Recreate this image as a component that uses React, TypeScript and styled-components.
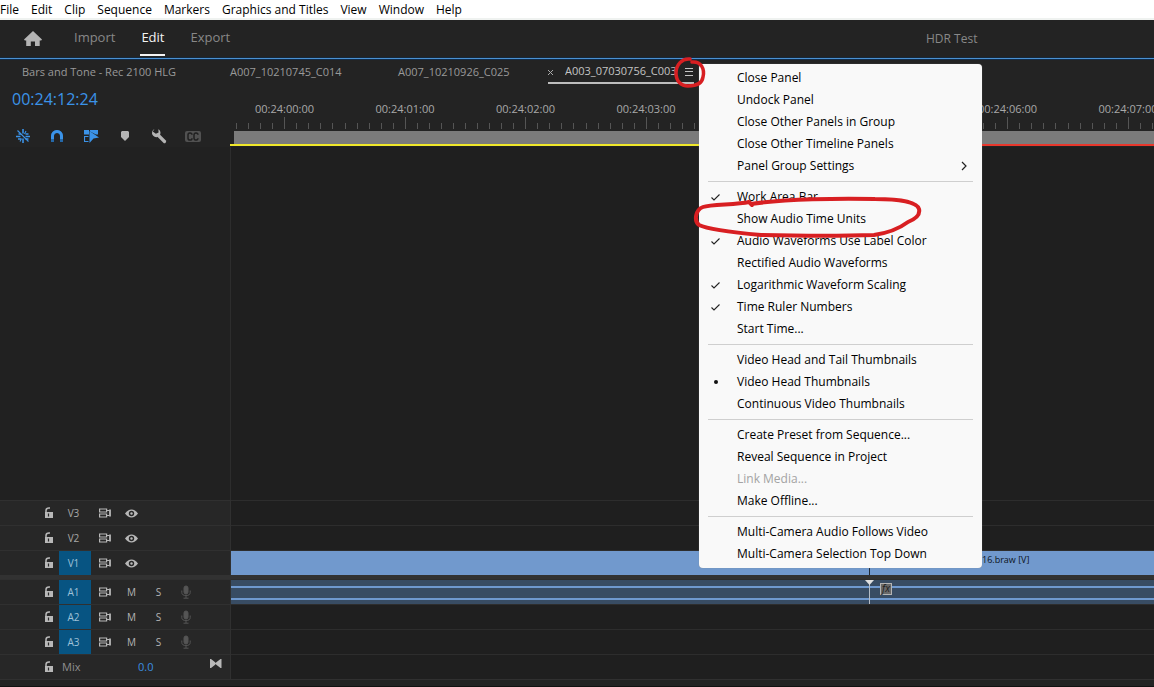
import React from "react";
import styled, { createGlobalStyle, css } from "styled-components";

const GlobalStyle = createGlobalStyle`
  *, *::before, *::after { box-sizing: border-box; }
  body {
    margin: 0;
    background: #1f1f1f;
    font-family: "Open Sans", "Noto Sans", sans-serif;
    font-size: 12px;
    overflow: hidden;
  }
  button, input {
    font: inherit;
    color: inherit;
    background: none;
    border: 0;
    padding: 0;
    margin: 0;
  }
  ul { list-style: none; margin: 0; padding: 0; }
  svg { display: block; flex: none; }
`;

const Shell = styled.div`
  display: flex;
  flex-direction: column;
  min-height: 100vh;
  background: #232323;
  color: #a0a0a0;
  overflow: hidden;
`;

const MenuBar = styled.nav`
  display: flex;
  gap: 12px;
  height: 20px;
  background: #fff;
  border-bottom: 2px solid #eff2f0;
  color: #000;
  line-height: 20px;
`;

const MenuBarItem = styled.button`
  height: 20px;
  white-space: nowrap;
`;

const Header = styled.header`
  display: flex;
  align-items: stretch;
  height: 38px;
  padding-left: 24px;
`;

const HomeButton = styled.button`
  display: flex;
  align-items: center;
  margin-right: 31px;
`;

const ModeTabs = styled.div`
  display: flex;
  gap: 24px;
`;

const ModeTab = styled.button<{ $active?: boolean }>`
  height: 36px;
  border-bottom: 2px solid ${(p) => (p.$active ? "#f4f4f4" : "transparent")};
  color: ${(p) => (p.$active ? "#f4f4f4" : "#888")};
  font-size: 13px;
  line-height: 34px;
  padding: 0 1px;
`;

const ProjectName = styled.div`
  margin-left: auto;
  width: 228px;
  color: #888;
  line-height: 38px;
`;

const TabStrip = styled.div`
  display: flex;
  height: 28px;
  border-top: 1px solid #4a90d2;
  box-shadow: 0 -1px 0 #16283a, inset 0 1px 0 #122c48;
  padding-left: 22px;
  font-size: 11px;
  line-height: 24px;
  color: #999;
`;

const SequenceTab = styled.button<{ $width: number }>`
  flex: none;
  width: ${(p) => p.$width}px;
  height: 25px;
  text-align: left;
  white-space: nowrap;
`;

const ActiveTab = styled.div`
  position: relative;
  display: flex;
  align-items: center;
  width: 146px;
  height: 25px;
  border-bottom: 2px solid #bdbdbd;
  color: #c4c4c4;
`;

const CloseTab = styled.button`
  width: 17px;
  padding-top: 3px;
  text-align: left;
`;

const TabTitle = styled.button`
  width: 111px;
  height: 24px;
  overflow: hidden;
  text-align: left;
  white-space: nowrap;
`;

const PanelMenuButton = styled.button`
  margin-left: auto;
  padding-top: 3px;
`;

const PanelMenu = styled.div`
  position: absolute;
  z-index: 5;
  top: 5px;
  left: 151px;
  width: 283px;
  padding: 3px 0;
  background: #f9f9f9;
  border-radius: 4px;
  color: #000;
  font-size: 12px;
  box-shadow: 0 0 1px #888;
`;

const PanelMenuGroup = styled.ul`
  & + & {
    position: relative;
    padding-top: 9px;
    &::before {
      content: "";
      position: absolute;
      top: 4px;
      left: 9px;
      right: 9px;
      height: 1px;
      background: #cfcfcf;
    }
  }
`;

const PanelMenuRow = styled.li`
  position: relative;
`;

const PanelMenuItem = styled.button`
  display: grid;
  grid-template-columns: 28px 1fr 14px;
  align-items: center;
  width: 100%;
  height: 22px;
  padding: 0 13px 0 10px;
  text-align: left;
  line-height: 22px;
  white-space: nowrap;
  &:disabled { color: #a3a3a3; }
`;

const TabCircle = styled.svg`
  position: absolute;
  z-index: 6;
  top: -4px;
  left: 124px;
`;

const ItemCircle = styled.svg`
  position: absolute;
  z-index: 6;
  top: -12px;
  left: -8px;
`;

const TimelineTop = styled.section`
  display: grid;
  grid-template-columns: 230px minmax(0, 1fr);
`;

const Controls = styled.div`
  padding: 2px 0 0 12px;
`;

const Timecode = styled.input`
  display: block;
  width: 120px;
  height: 22px;
  color: #3b93e8;
  font-size: 16px;
  font-weight: 500;
`;

const ToolRow = styled.div`
  display: flex;
  gap: 12px;
  margin-top: 15px;
`;

const ToolButton = styled.button`
  display: flex;
  align-items: center;
  justify-content: center;
  width: 22px;
  height: 22px;
`;

const RulerArea = styled.div`
  overflow: hidden;
`;

const Ruler = styled.div`
  display: flex;
  margin-left: -6px;
  padding-top: 15px;
`;

const RulerSecond = styled.div`
  flex: 0 0 120px;
  color: #a8a8a8;
  font-size: 11px;
  line-height: 16px;
  text-align: center;
  &:nth-child(odd) { flex-basis: 121px; }
`;

const WorkArea = styled.div`
  height: 13px;
  margin: 2px 0 0 4px;
  background: #7b7b7b;
`;

const RenderBar = styled.div`
  display: flex;
  height: 2px;
`;

const RenderSpan = styled.div<{ $color: string; $width?: number }>`
  flex: ${(p) => (p.$width ? `0 0 ${p.$width}px` : "1")};
  background: ${(p) => p.$color};
`;

const EmptySpace = styled.div`
  flex: 1;
  display: grid;
  grid-template-columns: 231px 1fr;
  min-height: 120px;
  background: #1f1f1f;
`;

const EmptyHeader = styled.div`
  border-right: 1px solid #2d2d2d;
  background: #212121;
`;

const Tracks = styled.section`
  position: relative;
`;

const TrackRow = styled.div`
  display: grid;
  grid-template-columns: 231px minmax(0, 1fr);
  height: 25px;
`;

const TrackHeader = styled.div`
  display: grid;
  grid-template-columns: 15px 32px 27px 27px 27px 27px 1fr;
  align-items: center;
  justify-items: center;
  padding-left: 44px;
  background: #272727;
  border-top: 1px solid #303030;
  border-right: 1px solid #303030;
  color: #b4b4b4;
  font-size: 10px;
  line-height: 24px;
`;

const IconButton = styled.button`
  display: flex;
  align-items: center;
  justify-content: center;
  height: 24px;
`;

const LockButton = styled(IconButton)`
  justify-self: start;
`;

const TrackName = styled.button<{ $target?: boolean }>`
  width: 32px;
  height: 24px;
  padding-right: 3px;
  color: #a8a8a8;
  ${(p) =>
    p.$target &&
    css`
      background: #075482;
      color: #9fc1d8;
    `}
`;

const Lane = styled.div`
  display: flex;
  background: #1f1f1f;
  border-top: 1px solid #2d2d2d;
`;

const VideoClip = styled.div<{ $width?: number }>`
  flex: ${(p) => (p.$width ? `0 0 ${p.$width}px` : "1")};
  padding-left: 112px;
  background: #7199cd;
  color: #0c1320;
  font-size: 9px;
  line-height: 18px;
  white-space: nowrap;
  & + & { border-left: 1px solid #1d2836; }
`;

const AudioClip = styled.div<{ $width?: number }>`
  flex: ${(p) => (p.$width ? `0 0 ${p.$width}px` : "1")};
  display: grid;
  grid-template-rows: 6px 2px 10px 2px 4px;
  background: #384c63;
  & + & { border-left: 1px solid #b4bcc6; }
`;

const Level = styled.div`
  grid-row: 2;
  background: #6f99cf;
  & + & { grid-row: 4; }
`;

const FxBadge = styled.div`
  position: absolute;
  top: 83px;
  left: 880px;
  width: 12px;
  height: 12px;
  border: 1px solid #b4b4b4;
  background: #696969;
  color: #1c1c1c;
  font-size: 10px;
  font-style: italic;
  line-height: 8px;
  text-align: center;
`;

const CutMarker = styled.svg`
  position: absolute;
  top: 79px;
  left: 865px;
`;

const Divider = styled.div`
  height: 4px;
  background: #323232;
`;

const MixName = styled.span`
  color: #8f8f8f;
  font-size: 11px;
  justify-self: start;
  padding-left: 3px;
`;

const MixLevel = styled.input`
  grid-column: 4 / 6;
  width: 54px;
  height: 20px;
  padding-left: 20px;
  color: #3b8ee0;
  font-size: 11px;
`;

const MixKeys = styled.div`
  grid-column: 7;
  justify-self: end;
  padding: 0 8px 8px 0;
`;

const Footer = styled.div`
  height: 8px;
  border-top: 1px solid #303030;
  border-bottom: 1px solid #111;
  background: #232323;
`;

const Home = () => (
  <svg width="18" height="16" viewBox="0 0 18 16" fill="#b4b4b4">
    <path d="M9 0 0 8.400l.8 1.100H2.200V15h4.600v-4.600h4.200V15h4.700V9.500h1.500l.8-1.100z" />
  </svg>
);

const Check = () => (
  <svg width="14" height="10" viewBox="0 0 14 10" fill="none" stroke="#222" strokeWidth="1.1">
    <path d="M2.500 5.500 5 8l5.500-5.500" />
  </svg>
);

const Dot = () => (
  <svg width="14" height="10" viewBox="0 0 14 10" fill="#111">
    <circle cx="7" cy="5" r="2" />
  </svg>
);

const Chevron = () => (
  <svg width="14" height="10" viewBox="0 0 14 10" fill="none" stroke="#222" strokeWidth="1.2">
    <path d="m7 1 4 4-4 4" />
  </svg>
);

const NestIcon = () => (
  <svg width="14" height="14" viewBox="0 0 14 14" stroke="#3b93e8" fill="none" strokeWidth="1.600">
    <path d="M7 0v4.500M7 9.500V14M2.500 5h2.500M0 7.500h4.500M9.500 5h3M9.500 7.500H14M2 10h3M9.500 10h3" />
    <path d="m1.500 1.500 11 11M10 2 8.500 5M5.500 9.500 4 12.500" strokeWidth="1.100" />
  </svg>
);

const MagnetIcon = () => (
  <svg width="14" height="14" viewBox="0 0 14 14" fill="none" strokeWidth="3">
    <path d="M2.500 13V7a4.500 4.500 0 0 1 9 0v6" stroke="#2568a8" />
    <path d="M2.500 10V7a4.500 4.500 0 0 1 9 0v3" stroke="#3b93e8" />
  </svg>
);

const LinkedIcon = () => (
  <svg width="15" height="13" viewBox="0 0 15 13">
    <path d="M0 0h5v4.500H0zM6 0h8v4.500h-2L6 1.500z" fill="#3b93e8" />
    <path d="M4.500 6.500h-4v5h4" fill="none" stroke="#3b93e8" strokeWidth="1.200" />
    <path d="M5.500 1v12l4-4.500 5.500-1z" fill="#3b93e8" />
  </svg>
);

const MarkerIcon = () => (
  <svg width="8" height="10" viewBox="0 0 8 10" fill="#b4b4b4">
    <path d="M1 0h6l1 1v5L4 10 0 6V1z" />
  </svg>
);

const WrenchIcon = () => (
  <svg width="16" height="16" viewBox="0 0 16 16">
    <path d="m7.500 7.500 6 6" stroke="#b4b4b4" strokeWidth="3.200" strokeLinecap="round" />
    <path d="M3 1.200A4.600 4.600 0 0 0 1 4a4.400 4.400 0 0 0 6 4.800A4.400 4.400 0 0 0 8 1.500L6.800 1 7.500 4.200 5 5.800 1.500 4z" fill="#b4b4b4" transform="rotate(8 5 5)" />
  </svg>
);

const CaptionIcon = () => (
  <svg width="16" height="11" viewBox="0 0 16 11">
    <rect width="16" height="11" rx="2" fill="#515151" />
    <path d="M7 3.800A2 2 0 0 0 3 4v3a2 2 0 0 0 4 .200M13 3.800A2 2 0 0 0 9 4v3a2 2 0 0 0 4 .200" fill="none" stroke="#202020" strokeWidth="1.500" />
  </svg>
);

const LockIcon = () => (
  <svg width="9" height="12" viewBox="0 0 9 12">
    <path d="M2 6V3.500Q2 1 5 1h1" fill="none" stroke="#b8b8b8" strokeWidth="1.500" />
    <path d="M1 5h8v6H1z" fill="#b8b8b8" />
    <path d="M4.500 6.500v3" stroke="#272727" strokeWidth="1.200" />
  </svg>
);

const SyncIcon = () => (
  <svg width="12" height="10" viewBox="0 0 12 10" fill="none" stroke="#b8b8b8" strokeWidth="1.200">
    <path d="M.600 1h7v3h-7zM.600 6h7v3h-7zM7.600 2.500h3M7.600 7.500h3" />
    <path d="M11 1.500v7" strokeWidth="1.800" />
  </svg>
);

const EyeIcon = () => (
  <svg width="13" height="9" viewBox="0 0 13 9">
    <path d="M0 4.500Q3 .500 6.500.500T13 4.500Q10 8.500 6.500 8.500T0 4.500z" fill="#b8b8b8" />
    <circle cx="6.500" cy="4.500" r="2.700" fill="#272727" />
    <circle cx="6.500" cy="4.500" r="1.200" fill="#b8b8b8" />
  </svg>
);

const MicIcon = () => (
  <svg width="10" height="14" viewBox="0 0 10 14" fill="none" stroke="#555">
    <rect x="3" y="1" width="4" height="8" rx="2" fill="#555" />
    <path d="M.800 5.500v2q0 3 4.200 3t4.200-3v-2M5 10.500V13M2.500 13.200h5" />
  </svg>
);

const KeyIcon = () => (
  <svg width="12" height="9" viewBox="0 0 12 9" fill="#b8b8b8">
    <path d="M0 0h1l4.500 3.500v2L1 9H0zM11.500 0h-1L6 3.500v2L10.500 9h1z" />
    <path d="M5 4h2v1H5z" />
  </svg>
);

type Entry = { label: string; mark?: "check" | "dot"; sub?: boolean; off?: boolean; circled?: boolean };

const panelMenu: Entry[][] = [
  [
    { label: "Close Panel" },
    { label: "Undock Panel" },
    { label: "Close Other Panels in Group" },
    { label: "Close Other Timeline Panels" },
    { label: "Panel Group Settings", sub: true },
  ],
  [
    { label: "Work Area Bar", mark: "check" },
    { label: "Show Audio Time Units", circled: true },
    { label: "Audio Waveforms Use Label Color", mark: "check" },
    { label: "Rectified Audio Waveforms" },
    { label: "Logarithmic Waveform Scaling", mark: "check" },
    { label: "Time Ruler Numbers", mark: "check" },
    { label: "Start Time..." },
  ],
  [
    { label: "Video Head and Tail Thumbnails" },
    { label: "Video Head Thumbnails", mark: "dot" },
    { label: "Continuous Video Thumbnails" },
  ],
  [
    { label: "Create Preset from Sequence..." },
    { label: "Reveal Sequence in Project" },
    { label: "Link Media...", off: true },
    { label: "Make Offline..." },
  ],
  [{ label: "Multi-Camera Audio Follows Video" }, { label: "Multi-Camera Selection Top Down" }],
];

const seconds = [0, 1, 2, 3, 4, 5, 6, 7];

function Track({ name, target, audio, children }: { name: string; target?: boolean; audio?: boolean; children?: React.ReactNode }) {
  return (
    <TrackRow>
      <TrackHeader>
        <LockButton aria-label={`Lock ${name}`}><LockIcon /></LockButton>
        <TrackName $target={target}>{name}</TrackName>
        <IconButton aria-label={`Sync lock ${name}`}><SyncIcon /></IconButton>
        {audio ? (
          <>
            <IconButton>M</IconButton>
            <IconButton>S</IconButton>
            <IconButton aria-label={`Record ${name}`}><MicIcon /></IconButton>
          </>
        ) : (
          <IconButton aria-label={`Show ${name}`}><EyeIcon /></IconButton>
        )}
      </TrackHeader>
      <Lane>{children}</Lane>
    </TrackRow>
  );
}

export default function App() {
  return (
    <Shell>
      <GlobalStyle />
      <MenuBar>
        {["File", "Edit", "Clip", "Sequence", "Markers", "Graphics and Titles", "View", "Window", "Help"].map((m) => (
          <MenuBarItem key={m}>{m}</MenuBarItem>
        ))}
      </MenuBar>
      <Header>
        <HomeButton aria-label="Home"><Home /></HomeButton>
        <ModeTabs>
          <ModeTab>Import</ModeTab>
          <ModeTab $active>Edit</ModeTab>
          <ModeTab>Export</ModeTab>
        </ModeTabs>
        <ProjectName>HDR Test</ProjectName>
      </Header>
      <TabStrip>
        <SequenceTab $width={208}>Bars and Tone - Rec 2100 HLG</SequenceTab>
        <SequenceTab $width={168}>A007_10210745_C014</SequenceTab>
        <SequenceTab $width={150}>A007_10210926_C025</SequenceTab>
        <ActiveTab>
          <CloseTab aria-label="Close tab">
            <svg width="5" height="5" viewBox="0 0 5 5" stroke="#aaa"><path d="m0 0 5 5M5 0 0 5" /></svg>
          </CloseTab>
          <TabTitle>A003_07030756_C003</TabTitle>
          <PanelMenuButton aria-label="Panel menu">
            <svg width="9" height="8" viewBox="0 0 9 8" fill="#c4c4c4"><path d="M0 0h8v1H0zM0 3h8v1H0zM0 7h8v1H0z" /></svg>
          </PanelMenuButton>
          <TabCircle width="36" height="36" viewBox="0 0 36 36" fill="none" stroke="#d81f22" strokeWidth="3.500" strokeLinecap="round">
            <path d="M18 4C10 3 4 10 4 18s5 13 12 13 14-2 15-9C33 14 29 6 20 7" />
          </TabCircle>
          <PanelMenu>
            {panelMenu.map((group, i) => (
              <PanelMenuGroup key={i}>
                {group.map((e) => (
                  <PanelMenuRow key={e.label}>
                    <PanelMenuItem disabled={e.off}>
                      <span>{e.mark === "check" ? <Check /> : e.mark === "dot" ? <Dot /> : null}</span>
                      <span>{e.label}</span>
                      {e.sub && <Chevron />}
                    </PanelMenuItem>
                    {e.circled && (
                      <ItemCircle width="236" height="46" viewBox="0 0 236 46" fill="none" stroke="#d81f22" strokeWidth="4" strokeLinecap="round" strokeLinejoin="round">
                        <path d="M61 9 58 6C45 9 20 8 12 11c-8 3-9 14-4 18 8 4 40 8 62 10 40 1 85 1 113 0 14-2 26-7 34-13 10-4 12-9 11-13-2-7-20-10-44-10-35-1-90 0-124 5" />
                      </ItemCircle>
                    )}
                  </PanelMenuRow>
                ))}
              </PanelMenuGroup>
            ))}
          </PanelMenu>
        </ActiveTab>
      </TabStrip>
      <TimelineTop>
        <Controls>
          <Timecode aria-label="Playhead position" defaultValue="00:24:12:24" />
          <ToolRow>
            <ToolButton aria-label="Insert as nest"><NestIcon /></ToolButton>
            <ToolButton aria-label="Snap"><MagnetIcon /></ToolButton>
            <ToolButton aria-label="Linked selection"><LinkedIcon /></ToolButton>
            <ToolButton aria-label="Add marker"><MarkerIcon /></ToolButton>
            <ToolButton aria-label="Timeline settings"><WrenchIcon /></ToolButton>
            <ToolButton aria-label="Captions"><CaptionIcon /></ToolButton>
          </ToolRow>
        </Controls>
        <RulerArea>
          <Ruler>
            {seconds.map((s) => (
              <RulerSecond key={s}>
                {`00:24:0${s}:00`}
                <svg width="120" height="12" viewBox="0 0 120 12" stroke="#555">
                  <path d="M.5 6v6M12.500 6v6M24.500 6v6M36.500 6v6M48.500 6v6M60.500 0v12M72.500 6v6M84.500 6v6M96.500 6v6M108.500 6v6" />
                </svg>
              </RulerSecond>
            ))}
          </Ruler>
          <WorkArea />
          <RenderBar>
            <RenderSpan $color="#f0e82a" $width={640} />
            <RenderSpan $color="#e8372c" />
          </RenderBar>
        </RulerArea>
      </TimelineTop>
      <EmptySpace><EmptyHeader /></EmptySpace>
      <Tracks>
        <Track name="V3" />
        <Track name="V2" />
        <Track name="V1" target>
          <VideoClip $width={638} />
          <VideoClip>16.braw [V]</VideoClip>
        </Track>
        <Divider />
        <Track name="A1" target audio>
          <AudioClip $width={638}><Level /><Level /></AudioClip>
          <AudioClip><Level /><Level /></AudioClip>
        </Track>
        <Track name="A2" target audio />
        <Track name="A3" target audio />
        <TrackRow>
          <TrackHeader>
            <LockButton aria-label="Lock mix"><LockIcon /></LockButton>
            <MixName>Mix</MixName>
            <MixLevel aria-label="Mix level" defaultValue="0.0" />
            <MixKeys><KeyIcon /></MixKeys>
          </TrackHeader>
          <Lane />
        </TrackRow>
        <CutMarker width="10" height="6" viewBox="0 0 10 6" fill="#e0e0e0"><path d="M0 1h9L4.500 6z" /></CutMarker>
        <FxBadge>fx</FxBadge>
      </Tracks>
      <Footer />
    </Shell>
  );
}
